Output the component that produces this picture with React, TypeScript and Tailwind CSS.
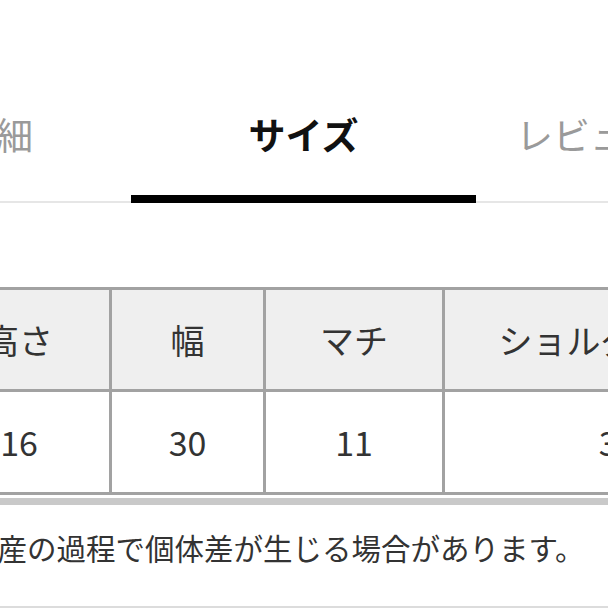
import React from "react";

const tabs = [
  { label: "詳細", width: "w-[270px]", active: false },
  { label: "サイズ", width: "w-[345px]", active: true },
  { label: "レビュー", width: "w-[228px]", active: false },
];

const headers = ["高さ", "幅", "マチ", "ショルダー長さ"];
const values = ["16", "30", "11", "35"];

export default function App() {
  return (
    <div className="flex h-[608px] w-[608px] flex-col overflow-hidden bg-white font-['Noto_Sans_CJK_JP','Noto_Sans',sans-serif]">
      {/* tab strip */}
      <div className="ml-[-139px] flex pt-[116px]">
        {tabs.map((tab) => (
          <div key={tab.label} className={`flex shrink-0 flex-col items-center ${tab.width}`}>
            <span
              className={
                tab.active
                  ? "whitespace-nowrap text-[37px] font-bold leading-none text-[#111]"
                  : "whitespace-nowrap text-[37px] leading-none text-[#9a9a9a]"
              }
            >
              {tab.label}
            </span>
            {tab.active ? (
              <div className="mt-[42px] h-[8px] w-full bg-black" />
            ) : (
              <div className="mt-[42px] h-[8px] w-full border-b-2 border-[#e6e6e6]" />
            )}
          </div>
        ))}
      </div>

      {/* size table */}
      <div className="ml-[-74px] mt-[84px] grid w-max grid-cols-[180px_151px_176px_345px] gap-[3px] bg-[#a2a2a2] p-[3px] text-[34px] leading-none text-[#333]">
        {headers.map((h) => (
          <div key={h} className="flex h-[99px] items-center justify-center whitespace-nowrap bg-[#efefef]">
            {h}
          </div>
        ))}
        {values.map((v, i) => (
          <div key={i} className="flex h-[100px] items-center justify-center bg-white">
            {v}
          </div>
        ))}
      </div>
      <div className="mt-[3px] h-[7px] w-full bg-[#c9c9c9]" />

      {/* note */}
      <p className="ml-[-32px] mt-[28px] whitespace-nowrap text-[29.5px] leading-none text-[#333]">
        生産の過程で個体差が生じる場合があります。
      </p>

      <div className="mt-auto h-[2px] w-full bg-[#dcdcdc]" />
    </div>
  );
}
